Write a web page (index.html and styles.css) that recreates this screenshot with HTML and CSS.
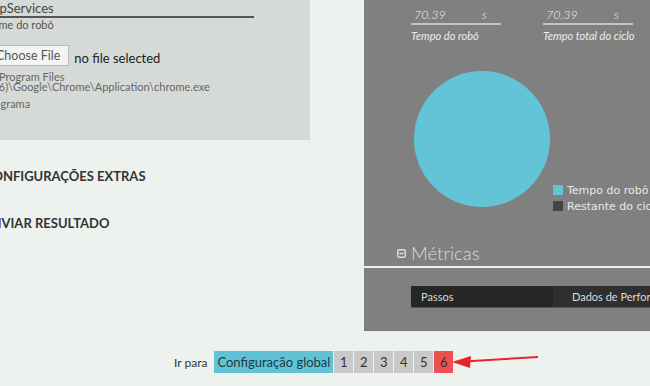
FILE: index.html
```html
<!DOCTYPE html>
<html lang="pt">

<head>
    <meta charset="UTF-8">
    <meta name="viewport" content="width=device-width, initial-scale=1.0">
    <title>Configuração</title>
    <link rel="stylesheet" href="styles.css">
</head>

<body>
    <div class="page">
        <div class="col-left">
            <div class="panel-left">
                <div class="name-field">ShopServices</div>
                <div class="hint">Nome do robô</div>
                <div class="file-row">
                    <span class="file-btn">Choose File</span>
                    <span class="file-text">no file selected</span>
                </div>
                <div class="path">C:\Program Files<br>(x86)\Google\Chrome\Application\chrome.exe</div>
                <div class="hint hint-prog">Programa</div>
            </div>
            <h3 class="step step-first">CONFIGURAÇÕES EXTRAS</h3>
            <h3 class="step">ENVIAR RESULTADO</h3>
        </div>

        <div class="panel-right">
            <div class="fields">
                <div class="field">
                    <div class="field-value"><span>70.39</span><span>s</span></div>
                    <div class="field-label">Tempo do robô</div>
                </div>
                <div class="field">
                    <div class="field-value"><span>70.39</span><span>s</span></div>
                    <div class="field-label">Tempo total do ciclo</div>
                </div>
            </div>
            <div class="chart">
                <div class="pie"></div>
                <div class="legend">
                    <div class="legend-item"><span class="swatch swatch-robot"></span>Tempo do robô</div>
                    <div class="legend-item"><span class="swatch swatch-rest"></span>Restante do ciclo</div>
                </div>
            </div>
            <div class="metrics-head">
                <svg width="9" height="9" viewBox="0 0 9 9">
                    <rect x="0.75" y="0.75" width="7.5" height="7.5" rx="1.5" fill="none" stroke="#dcdcdc" stroke-width="1.5"/>
                    <line x1="2.5" y1="4.5" x2="6.5" y2="4.5" stroke="#dcdcdc" stroke-width="1.5"/>
                </svg>
                <span>Métricas</span>
            </div>
            <div class="metrics-body">
                <div class="table-head">
                    <div class="th th-steps">Passos</div>
                    <div class="th th-perf">Dados de Performance</div>
                </div>
            </div>
        </div>
    </div>

    <div class="nav">
        <span class="nav-label">Ir para</span>
        <span class="nav-global">Configuração global</span>
        <span class="nav-num">1</span>
        <span class="nav-num">2</span>
        <span class="nav-num">3</span>
        <span class="nav-num">4</span>
        <span class="nav-num">5</span>
        <span class="nav-num nav-current">6</span>
    </div>

    <svg class="arrow" width="92" height="22" viewBox="0 0 92 22">
        <line x1="18" y1="11.2" x2="88" y2="7" stroke="#e8232a" stroke-width="2"/>
        <polygon points="2,12 21,6 20,18" fill="#e8232a"/>
    </svg>
</body>

</html>
```

FILE: styles.css
```css
* {
    padding: 0;
    margin: 0;
    box-sizing: border-box;
}

body {
    width: 650px;
    height: 386px;
    overflow: hidden;
    position: relative;
    background: #eef2ef;
    font-family: Lato, "Noto Sans", sans-serif;
    color: #333;
}

.page {
    display: flex;
    margin-left: -16px;
}

/* coluna da esquerda */
.col-left {
    width: 326px;
    flex-shrink: 0;
    margin-right: 54px;
}

.panel-left {
    height: 140px;
    background: #d6dad7;
}

.name-field {
    width: 270px;
    height: 18px;
    text-indent: -6px;
    overflow: hidden;
    white-space: nowrap;
    font-size: 13px;
    line-height: 16px;
    color: #444;
    border-bottom: 2px solid #555;
}

.hint {
    margin-top: 1px;
    font-size: 11px;
    line-height: 12px;
    color: #555;
}

.file-row {
    display: flex;
    align-items: center;
    margin-top: 14px;
    height: 21px;
}

.file-btn {
    height: 21px;
    padding: 0 8px 0 11px;
    font-size: 12.5px;
    line-height: 19px;
    color: #555;
    background: #f4f4f4;
    border: 1px solid #b9b9b9;
}

.file-text {
    margin-left: 5px;
    margin-top: 4px;
    font-size: 13px;
    color: #222;
}

.path {
    margin-top: 6px;
    font-size: 11px;
    line-height: 10px;
    color: #666;
}

.hint-prog {
    margin-top: 6px;
    color: #666;
}

.step {
    font-size: 13px;
    font-weight: bold;
    line-height: 16px;
    color: #333;
}

.step-first {
    margin-top: 28px;
    margin-bottom: 31px;
}

/* painel cinza da direita */
.panel-right {
    width: 300px;
    height: 331px;
    flex-shrink: 0;
    background: #808080;
    border-bottom: 1px solid #777;
}

.fields {
    display: flex;
    gap: 42px;
    padding: 6px 0 0 47px;
}

.field {
    width: 90px;
    white-space: nowrap;
}

.field-value {
    display: flex;
    justify-content: space-between;
    padding: 0 14px 0 3px;
    font-size: 12.5px;
    font-style: italic;
    font-weight: 300;
    line-height: 17px;
    color: #f0f0f0;
    border-bottom: 2px solid #c4c4c4;
}

.field-label {
    margin-top: 5px;
    font-size: 11px;
    font-style: italic;
    line-height: 12px;
    color: #ededed;
}

.chart {
    display: flex;
    align-items: flex-start;
    height: 136px;
    margin-top: 29px;
    padding-left: 50px;
}

.pie {
    width: 136px;
    height: 136px;
    flex-shrink: 0;
    border-radius: 50%;
    background: #62c4d6;
}

.legend {
    margin: 111px 0 0 3px;
    font-family: "DejaVu Sans", sans-serif;
    font-size: 11px;
    color: #e8e8e8;
    white-space: nowrap;
}

.legend-item {
    display: flex;
    align-items: center;
    height: 16px;
}

.swatch {
    width: 10px;
    height: 10px;
    margin-right: 4px;
}

.swatch-robot {
    background: #62c4d6;
}

.swatch-rest {
    background: #444;
}

.metrics-head {
    display: flex;
    align-items: center;
    height: 22px;
    margin-top: 35px;
    padding-left: 33px;
    font-size: 18.5px;
    font-weight: 300;
    color: #dcdcdc;
}

.metrics-head span {
    margin-left: 5px;
}

.metrics-body {
    margin-top: 2px;
    padding: 18px 0 0 47px;
    border-top: 2px solid #eef0ef;
}

.table-head {
    display: flex;
    height: 22px;
    font-size: 11px;
    line-height: 22px;
    color: #dcdcdc;
    border-bottom: 1px solid #555;
}

.th {
    white-space: nowrap;
    overflow: hidden;
}

.th-steps {
    width: 142px;
    padding-left: 10px;
    background: #262626;
}

.th-perf {
    flex: 1;
    padding-left: 19px;
    background: #2f2f2f;
}

/* navegação inferior */
.nav {
    display: flex;
    align-items: center;
    margin-top: 20px;
    padding-left: 174px;
    height: 22px;
}

.nav-label {
    margin-right: 7px;
    font-size: 12px;
    color: #333;
}

.nav-global {
    width: 119px;
    height: 22px;
    font-size: 13px;
    line-height: 22px;
    text-align: center;
    color: #1d3a44;
    background: #60c3d5;
}

.nav-num {
    width: 19px;
    height: 22px;
    margin-left: 1px;
    font-size: 13px;
    line-height: 22px;
    text-align: center;
    color: #333;
    background: #c9c9c9;
}

.nav-current {
    background: #ee4f50;
}

.arrow {
    position: absolute;
    left: 450px;
    top: 350px;
}
```
